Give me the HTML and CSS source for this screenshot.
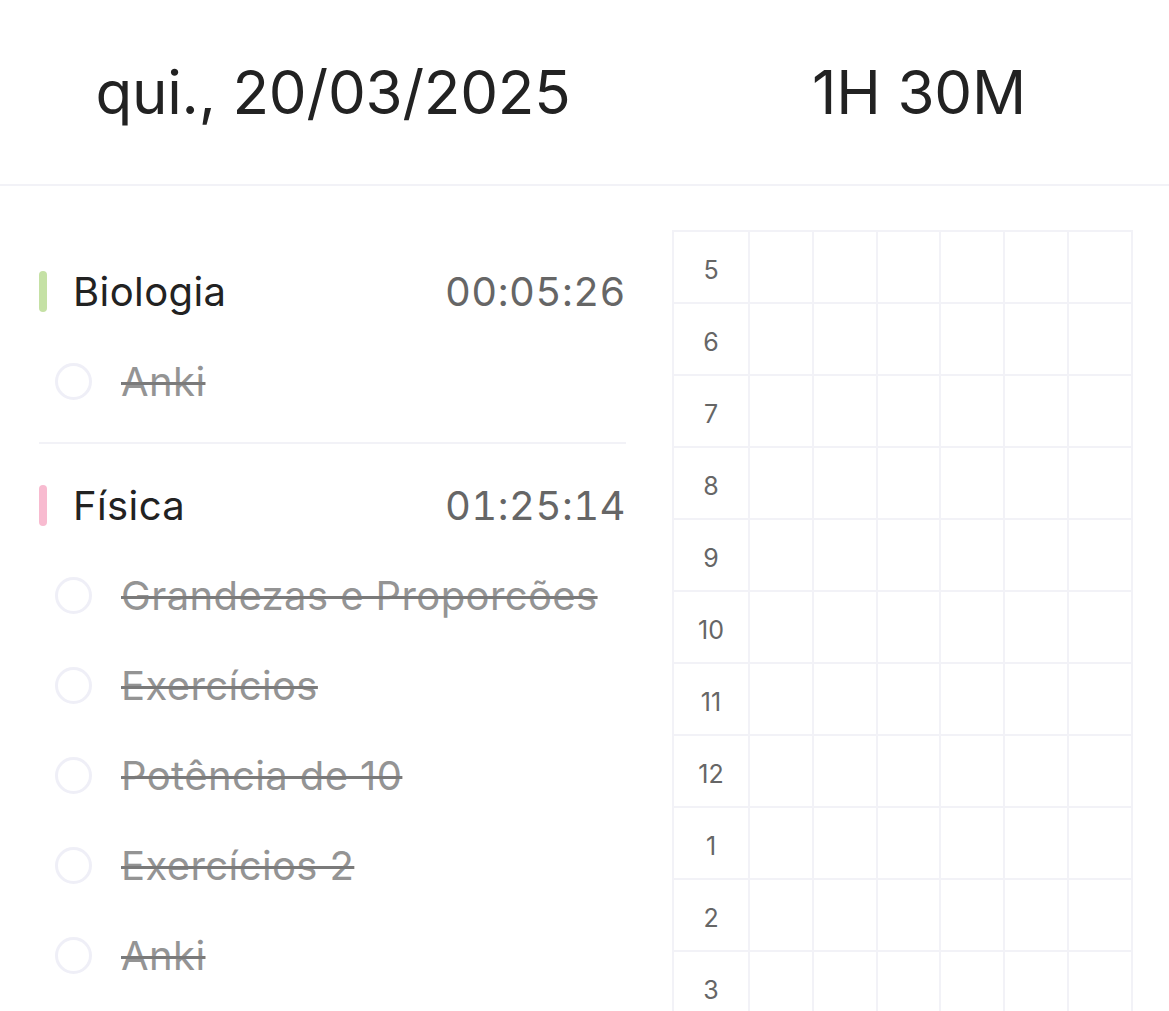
FILE: index.html
```html
<!DOCTYPE html>
<html lang="pt-BR">
<head>
  <meta charset="UTF-8" />
  <meta name="viewport" content="width=device-width, initial-scale=1.0"/>
  <title>Estudos do dia</title>
  <link rel="stylesheet" href="styles.css">
</head>
<body>

  <header class="day-header">
    <div class="day-date">qui., 20/03/2025</div>
    <div class="day-total">1H 30M</div>
  </header>

  <main class="day-body">
    <section class="subjects">
      <div class="subject">
        <div class="subject-row">
          <span class="subject-bar green"></span>
          <span class="subject-name">Biologia</span>
          <span class="subject-time">00:05:26</span>
        </div>
        <div class="task"><span class="task-check"></span><span class="task-name">Anki</span></div>
      </div>

      <div class="subject">
        <div class="subject-row">
          <span class="subject-bar pink"></span>
          <span class="subject-name">Física</span>
          <span class="subject-time">01:25:14</span>
        </div>
        <div class="task"><span class="task-check"></span><span class="task-name">Grandezas e Proporcões</span></div>
        <div class="task"><span class="task-check"></span><span class="task-name">Exercícios</span></div>
        <div class="task"><span class="task-check"></span><span class="task-name">Potência de 10</span></div>
        <div class="task"><span class="task-check"></span><span class="task-name">Exercícios 2</span></div>
        <div class="task"><span class="task-check"></span><span class="task-name">Anki</span></div>
      </div>
    </section>

    <section class="timeline" id="timeline"></section>
  </main>

  <script>
  // hour rows of the timeline, 5am onwards
  const hours = [5, 6, 7, 8, 9, 10, 11, 12, 1, 2, 3];
  const timeline = document.getElementById("timeline");

  hours.forEach(function (h) {
    const label = document.createElement("div");
    label.className = "hour";
    label.textContent = h;
    timeline.appendChild(label);
    for (let i = 0; i < 6; i++) {
      const cell = document.createElement("div");
      cell.className = "slot";
      timeline.appendChild(cell);
    }
  });
  </script>

</body>
</html>
```

FILE: styles.css
```css
* { margin: 0; padding: 0; box-sizing: border-box; }

html, body {
  height: 100%;
  overflow: hidden;
}

body {
  font-family: 'Inter', 'Noto Sans', sans-serif;
  background: #fff;
  color: #222;
}

.day-header {
  display: grid;
  grid-template-columns: 586px 586px;
  align-items: center;
  height: 186px;
  padding-left: 40px;
  border-bottom: 2px solid #f2f2f7;
}

.day-date,
.day-total {
  text-align: center;
  font-size: 60px;
  letter-spacing: -0.2px;
  color: #222;
}

.day-body {
  display: flex;
  align-items: flex-start;
  gap: 46px;
  padding: 44px 0 0 39px;
}

.subjects {
  width: 587px;
  flex-shrink: 0;
}

.subject {
  padding: 16px 0;
}

.subject + .subject {
  border-top: 2px solid #f2f2f7;
}

.subject-row {
  display: flex;
  align-items: center;
  height: 90px;
}

.subject-bar {
  width: 8px;
  height: 41px;
  border-radius: 4px;
  margin-right: 26px;
}

.subject-bar.green { background: #c5e1a5; }
.subject-bar.pink { background: #f8bbd0; }

.subject-name {
  flex: 1;
  font-size: 40px;
  letter-spacing: 0.4px;
}

.subject-time {
  font-size: 40px;
  letter-spacing: 0.5px;
  color: #666;
  font-variant-numeric: tabular-nums;
}

.task {
  display: flex;
  align-items: center;
  height: 90px;
  padding-left: 16px;
}

.task-check {
  width: 37px;
  height: 37px;
  border: 3px solid #efeff7;
  border-radius: 50%;
  margin-right: 29px;
}

.task-name {
  font-size: 40px;
  letter-spacing: 0.4px;
  color: #949494;
  text-decoration: line-through;
  text-decoration-color: #7a7a7a;
  text-decoration-thickness: 3px;
}

.timeline {
  width: 461px;
  display: grid;
  grid-template-columns: 74px repeat(6, 1fr);
  grid-auto-rows: 70px;
  gap: 2px;
  padding: 2px;
  background: #f2f2f7;
}

.hour,
.slot {
  background: #fff;
}

.hour {
  display: flex;
  align-items: center;
  justify-content: center;
  padding-top: 5px;
  font-size: 25px;
  color: #666;
}
```
